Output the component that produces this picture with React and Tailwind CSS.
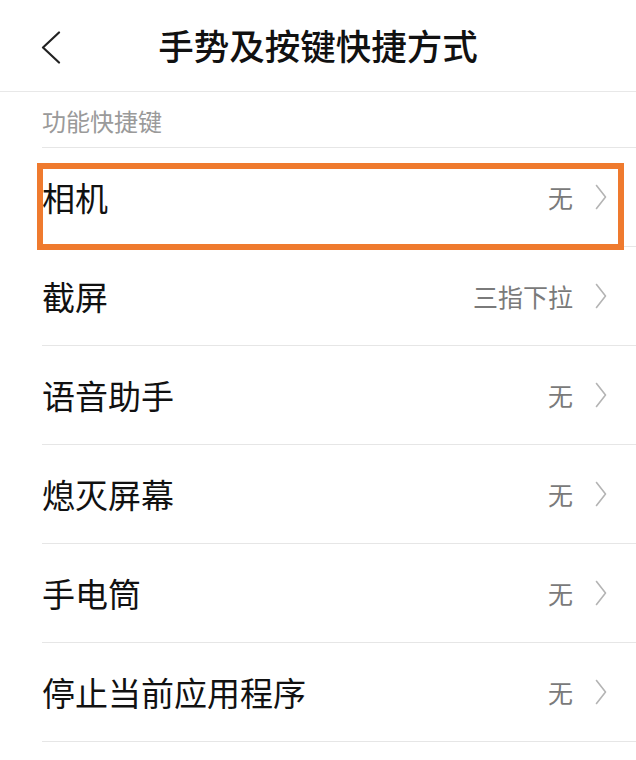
const items = [
  { label: '相机', value: '无' },
  { label: '截屏', value: '三指下拉' },
  { label: '语音助手', value: '无' },
  { label: '熄灭屏幕', value: '无' },
  { label: '手电筒', value: '无' },
  { label: '停止当前应用程序', value: '无' },
];

const Chevron = () => (
  <svg width="12" height="26" viewBox="0 0 12 26" fill="none" className="shrink-0">
    <polyline points="1.5,1.5 10.5,13 1.5,24.5" stroke="#b4b4b4" strokeWidth="1.6" strokeLinecap="round" strokeLinejoin="round" />
  </svg>
);

const Row = ({ label, value }) => (
  <div className="h-[99px] border-b border-[#e6e6e6] flex items-center justify-between pr-[29px]">
    <span className="text-[33px] text-[#111] leading-none">{label}</span>
    <div className="flex items-center gap-[22px]">
      <span className="text-[25px] text-[#7a7a7a] leading-none">{value}</span>
      <Chevron />
    </div>
  </div>
);

export default function App() {
  return (
    <div
      className="relative w-[636px] h-[760px] bg-white overflow-hidden"
      style={{ fontFamily: '"Noto Sans CJK SC", "Noto Sans", sans-serif' }}
    >
      <header className="h-[92px] border-b border-[#e8e8e8] flex items-center justify-center relative">
        <button className="absolute left-[40px] top-[31px]">
          <svg width="22" height="33" viewBox="0 0 22 33" fill="none">
            <polyline points="19,1.5 3,16.5 19,31.5" stroke="#222" strokeWidth="2.2" strokeLinecap="round" strokeLinejoin="round" />
          </svg>
        </button>
        <h1 className="text-[35.5px] font-medium text-[#111] leading-none -mt-[2px]">手势及按键快捷方式</h1>
      </header>

      <div className="pl-[42px]">
        <div className="h-[56px] border-b border-[#e6e6e6] flex items-center pt-[2px]">
          <span className="text-[24px] text-[#9a9a9a] leading-none">功能快捷键</span>
        </div>
        {items.map((it) => (
          <Row key={it.label} {...it} />
        ))}
      </div>

      <div className="absolute left-[37px] top-[163px] w-[587px] h-[87px] border-[6px] border-[#ef7a2e] pointer-events-none" />
    </div>
  );
}
